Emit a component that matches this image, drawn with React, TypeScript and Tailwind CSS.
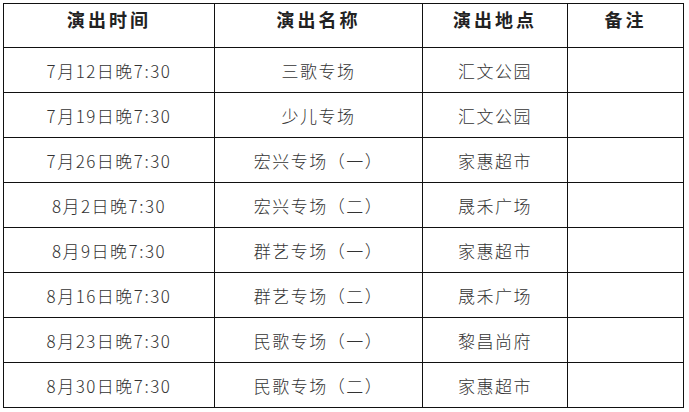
const rows = [
  ["7月12日晚7:30", "三歌专场", "汇文公园"],
  ["7月19日晚7:30", "少儿专场", "汇文公园"],
  ["7月26日晚7:30", "宏兴专场（一）", "家惠超市"],
  ["8月2日晚7:30", "宏兴专场（二）", "晟禾广场"],
  ["8月9日晚7:30", "群艺专场（一）", "家惠超市"],
  ["8月16日晚7:30", "群艺专场（二）", "晟禾广场"],
  ["8月23日晚7:30", "民歌专场（一）", "黎昌尚府"],
  ["8月30日晚7:30", "民歌专场（二）", "家惠超市"],
];

const cols = ["w-[211px]", "w-[208px]", "w-[145px]", "w-[116px]"];

export default function App() {
  return (
    <div className="h-[412px] w-[689px] bg-white pl-[3px] pt-[3px] font-['Noto_Sans_CJK_SC','Noto_Sans',sans-serif]">
      <table className="table-fixed border-collapse border border-[#111]">
        <thead>
          <tr className="h-[44px]">
            {["演出时间", "演出名称", "演出地点", "备注"].map((h, i) => (
              <th
                key={h}
                className={`${cols[i]} border border-[#111] pb-[12px] text-center align-middle text-[18px] font-bold tracking-[3px] text-[#222]`}
              >
                {h}
              </th>
            ))}
          </tr>
        </thead>
        <tbody>
          {rows.map((r, i) => (
            <tr key={i} className="h-[45px]">
              {[...r, ""].map((c, j) => (
                <td
                  key={j}
                  className="border border-[#111] pt-[2px] text-center align-middle text-[17px] font-light tracking-[1.5px] text-[#333]"
                >
                  {c}
                </td>
              ))}
            </tr>
          ))}
        </tbody>
      </table>
    </div>
  );
}
